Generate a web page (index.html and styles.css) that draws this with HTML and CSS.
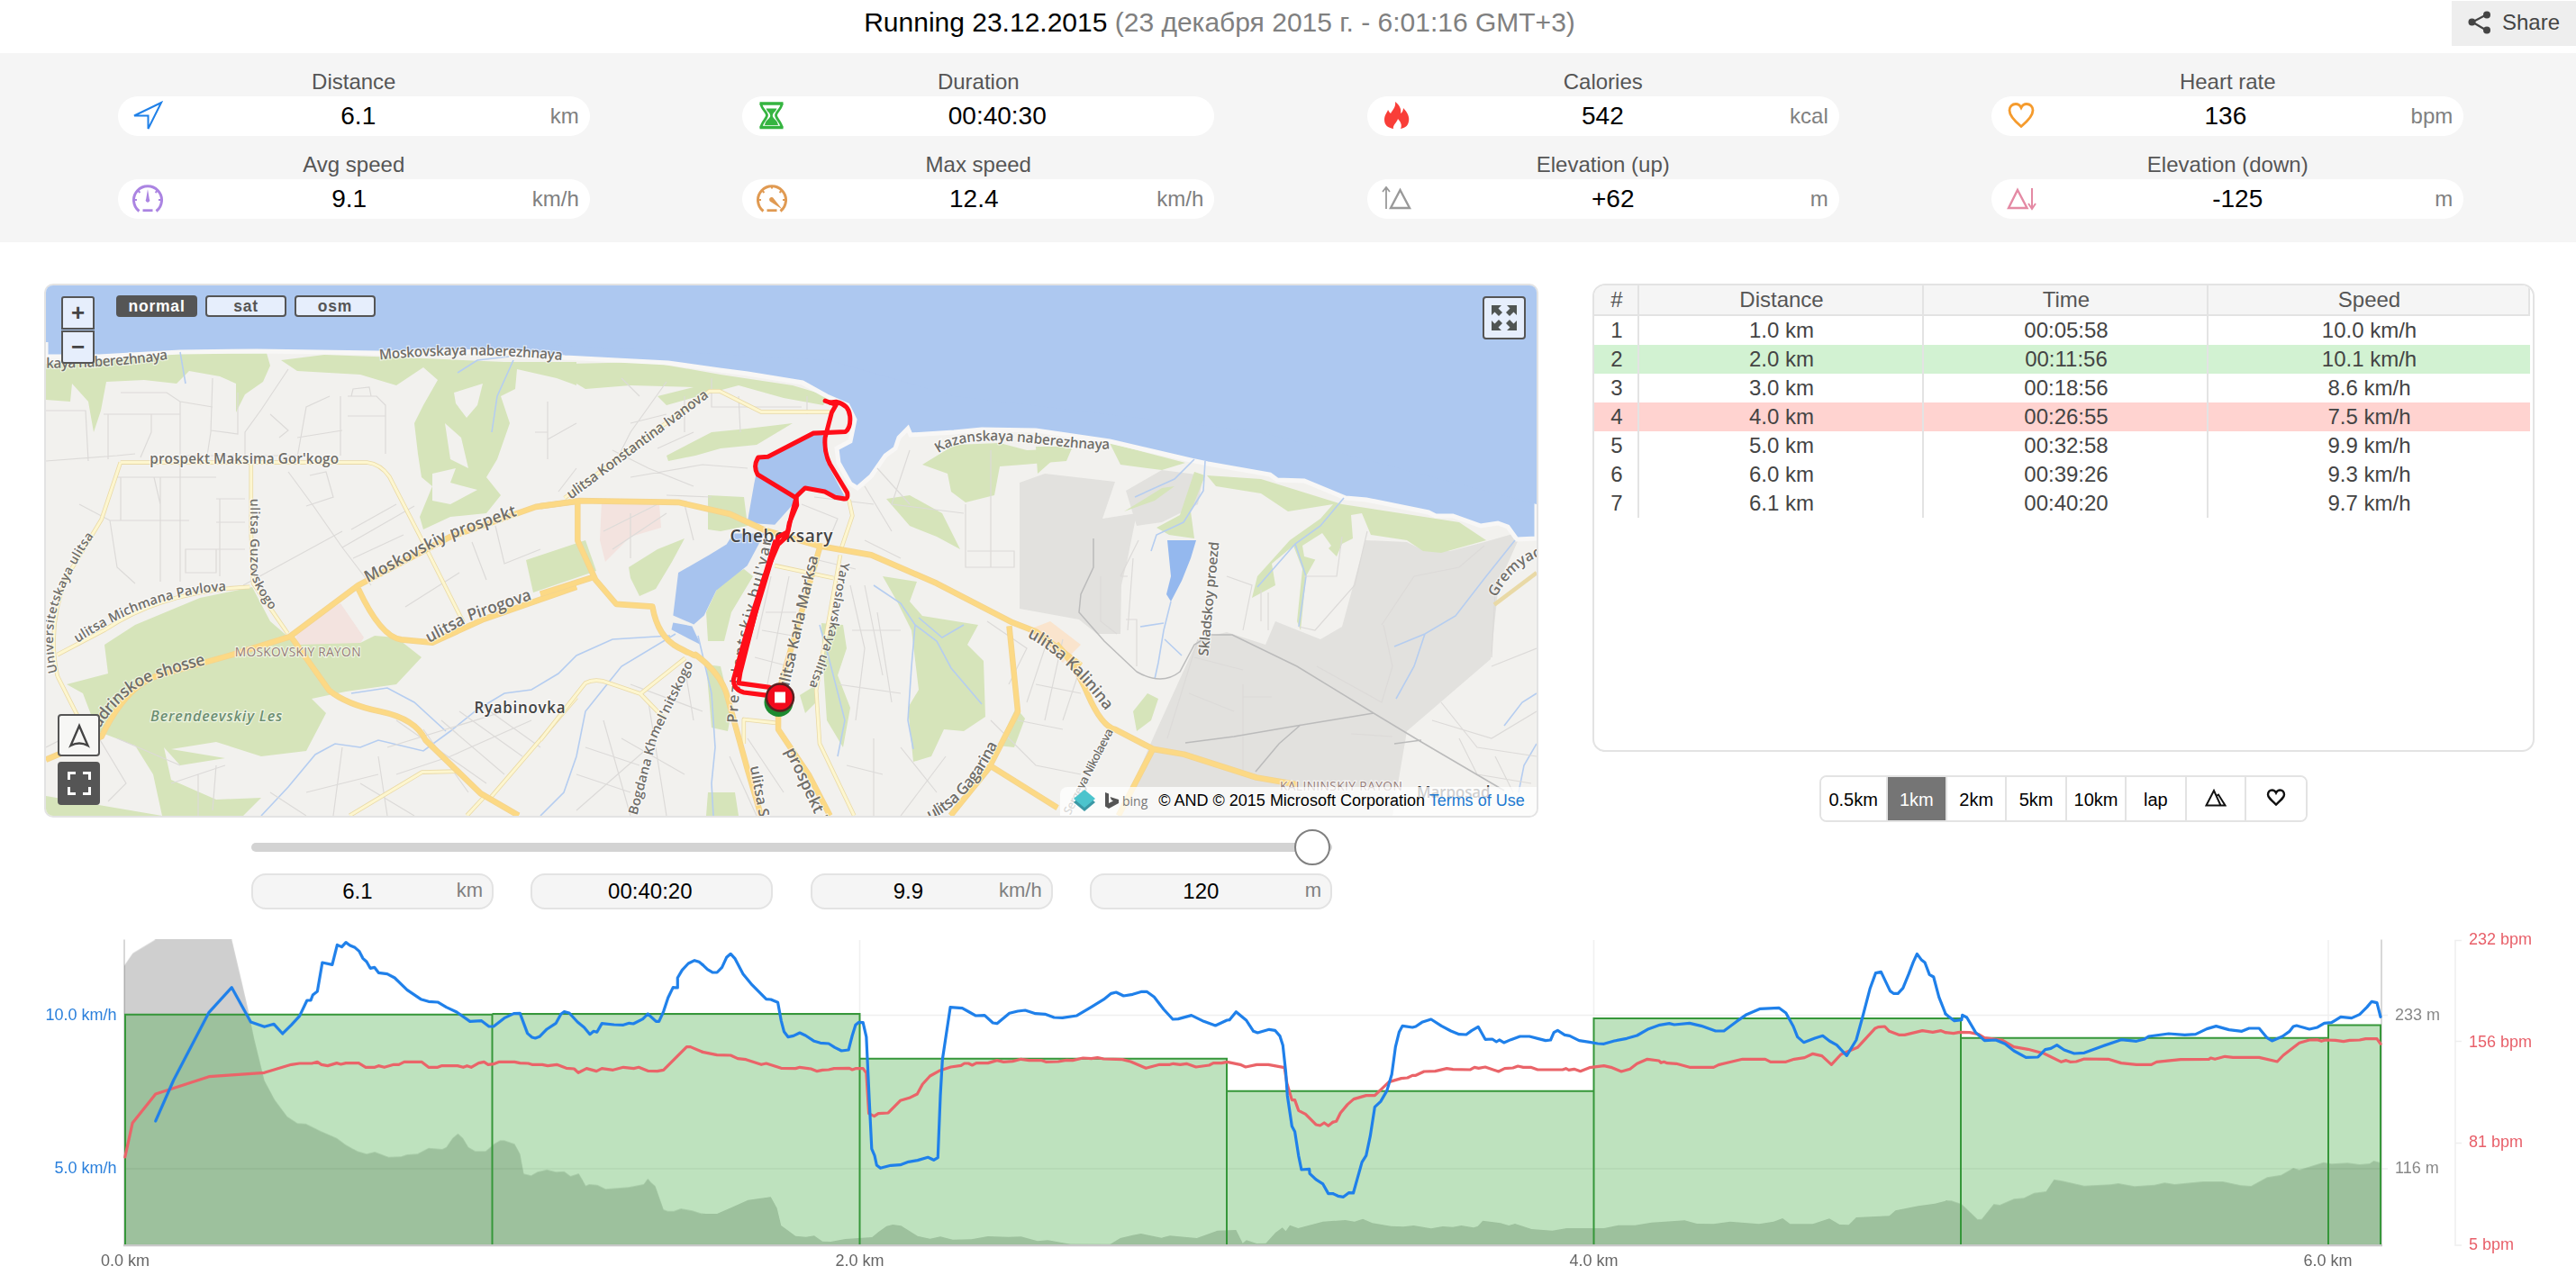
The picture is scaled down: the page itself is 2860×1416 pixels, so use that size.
FILE: index.html
```html
<!DOCTYPE html>
<html lang="en">

<head>
    <meta charset="UTF-8">
    <title>Running 23.12.2015</title>
    <link rel="stylesheet" href="styles.css">
</head>

<body>

    <header class="header">
        <h1 class="title">Running 23.12.2015 <span>(23 декабря 2015 г. - 6:01:16 GMT+3)</span></h1>
        <button class="share-button">
            <svg width="26" height="26" viewBox="0 0 26 26"><path d="M21 4L5 12.500L21 22" fill="none" stroke="#444" stroke-width="2.200"/><circle cx="21" cy="4.500" r="4" fill="#444"/><circle cx="4.500" cy="12.500" r="4" fill="#444"/><circle cx="21" cy="21.500" r="4" fill="#444"/></svg>
            Share
        </button>
    </header>

    <section class="stats">
        <div class="stat">
            <div class="stat-label">Distance</div>
            <div class="stat-box">
                <svg class="stat-icon" viewBox="0 0 34 34"><path d="M32 2L2 16.500H17.500V31Z" fill="none" stroke="#1f80e8" stroke-width="2"/></svg>
                <span class="value">6.1</span><span class="unit">km</span>
            </div>
        </div>
        <div class="stat">
            <div class="stat-label">Duration</div>
            <div class="stat-box">
                <svg class="stat-icon" viewBox="0 0 34 34"><path d="M3.500 3H29.500M3.500 29.500H29.500" stroke="#35b440" stroke-width="3.400"/><path d="M5 3C5 9 11.500 12 11.500 16S5 24 5 30M28 3C28 9 21.500 12 21.500 16S28 24 28 30" fill="none" stroke="#35b440" stroke-width="2.800"/><path d="M10.500 8.500H22.500C21 12.500 17.800 13 17.800 17C18.500 20 23 21 24 27H9C10 21 14.500 20 15.200 17C15.200 13 12 12.500 10.500 8.500Z" fill="#35b440"/></svg>
                <span class="value">00:40:30</span><span class="unit"></span>
            </div>
        </div>
        <div class="stat">
            <div class="stat-label">Calories</div>
            <div class="stat-box">
                <svg class="stat-icon" viewBox="0 0 34 34"><path d="M15 1C20 5 22 9 21 14C23 13 24 10 24 8C29 13 31 18 30 23C29 28 26 30 21 31C23 27 21 23 18 20C17 24 12 27 13 31C7 30 3 27 3 21C3 16 6 13 7 10C8 12 9 13 10 14C12 10 16 7 15 1Z" fill="#f93e38"/></svg>
                <span class="value">542</span><span class="unit">kcal</span>
            </div>
        </div>
        <div class="stat">
            <div class="stat-label">Heart rate</div>
            <div class="stat-box">
                <svg class="stat-icon" viewBox="0 0 34 34"><path d="M17 28.500C8 21 4 16 4 10.500C4 6.500 7 3.500 11 3.500C14 3.500 16 5.500 17 7.500C18 5.500 20 3.500 23 3.500C27 3.500 30 6.500 30 10.500C30 16 26 21 17 28.500Z" fill="none" stroke="#f59b2d" stroke-width="2.800"/></svg>
                <span class="value">136</span><span class="unit">bpm</span>
            </div>
        </div>
        <div class="stat">
            <div class="stat-label">Avg speed</div>
            <div class="stat-box">
                <svg class="stat-icon" viewBox="0 0 34 34"><path d="M7.500 30.500A15.500 15.500 0 1 1 26.500 30.500" fill="none" stroke="#ab84e2" stroke-width="3"/><path d="M11.500 29.700H22.500" stroke="#ab84e2" stroke-width="2.800"/><path d="M2 18H5M29 18H32M6.500 8L8.500 10M27.500 8L25.500 10" stroke="#ab84e2" stroke-width="2"/><path d="M17 6L18.800 17A2.300 2.300 0 1 1 15.200 17Z" fill="#ab84e2"/></svg>
                <span class="value">9.1</span><span class="unit">km/h</span>
            </div>
        </div>
        <div class="stat">
            <div class="stat-label">Max speed</div>
            <div class="stat-box">
                <svg class="stat-icon" viewBox="0 0 34 34"><path d="M7.500 30.500A15.500 15.500 0 1 1 26.500 30.500" fill="none" stroke="#e09a52" stroke-width="3"/><path d="M11.500 29.700H22.500" stroke="#e09a52" stroke-width="2.800"/><path d="M2 18H5M29 18H32M6.500 8L8.500 10M27.500 8L25.500 10M17 3V5.500" stroke="#e09a52" stroke-width="2"/><path d="M28.500 28.500L15.500 20A2.600 2.600 0 1 1 19 16.500Z" fill="#e09a52"/></svg>
                <span class="value">12.4</span><span class="unit">km/h</span>
            </div>
        </div>
        <div class="stat">
            <div class="stat-label">Elevation (up)</div>
            <div class="stat-box">
                <svg class="stat-icon" viewBox="0 0 34 34"><path d="M5 28V5M1 9L5 4L9 9" fill="none" stroke="#999" stroke-width="1.800"/><path d="M20.500 7L31 27H10Z" fill="none" stroke="#999" stroke-width="2.400"/></svg>
                <span class="value">+62</span><span class="unit">m</span>
            </div>
        </div>
        <div class="stat">
            <div class="stat-label">Elevation (down)</div>
            <div class="stat-box">
                <svg class="stat-icon" viewBox="0 0 34 34"><path d="M29 5V27M25 22L29 28L33 22" fill="none" stroke="#e48aa4" stroke-width="2"/><path d="M13 7L23.500 27H3Z" fill="none" stroke="#e48aa4" stroke-width="2.400"/></svg>
                <span class="value">-125</span><span class="unit">m</span>
            </div>
        </div>
    </section>

    <main class="content">
        <div class="left">
            <div class="map">
                <svg class="map-canvas" viewBox="51 317 1655 589" preserveAspectRatio="none">
                    <rect x="51" y="317" width="1655" height="589" fill="#f2f1ee"/>

                    <!-- industrial areas and districts -->
                    <g fill="#e2e1de">
                        <path d="M1132 536L1160 526L1238 535L1224 576L1262 570L1252 620L1245 650L1244 704L1218 704L1198 688L1132 676Z"/>
                        <path d="M1250 545L1290 522L1336 528L1330 560L1290 580L1262 584Z"/>
                        <path d="M1516 600L1562 602L1582 612L1610 612L1648 602L1690 590L1664 648L1655 732L1562 812L1546 906H1243L1280 820L1330 710L1362 702L1405 716L1416 690L1466 710L1490 696Z"/>
                    </g>
                    <g fill="#f3e3df">
                        <path d="M328 700L378 670L404 708L398 718L330 718Z"/>
                        <path d="M668 556L732 560L734 586L700 596L672 624L666 600Z"/>
                    </g>
                    <path d="M1140 700L1166 690L1200 716L1180 736Z" fill="#fae4cd"/>

                    <!-- parks -->
                    <g fill="#d6e4ba">
                        <path d="M51 404L110 400L190 393L296 392L300 406L292 424L272 438L262 458L262 426L244 418L210 412L196 426L160 422L118 424L112 456L104 480L98 446L80 426L78 446L51 444Z"/>
                        <path d="M312 400L360 394L470 398L560 402L640 402L640 428L618 420L574 410L572 432L556 440L566 470L552 510L540 530L556 550L540 570L500 574L470 588L466 574L480 540L468 530L464 504L460 470L470 450L486 422L470 408L440 428L400 416L330 412Z"/>
                        <path d="M630 404L720 402L800 416L880 428L920 440L914 450L870 442L820 428L790 436L740 450L730 440L770 430L700 428L650 432L630 420Z"/>
                        <path d="M740 506L790 480L830 476L880 470L840 494L800 498L772 506L742 512Z"/>
                        <path d="M116 716L150 694L222 664L280 652L300 690L330 716L400 714L416 706L440 708L468 730L440 760L384 768L346 776L362 792L340 834L290 840L240 824L190 832L250 842L200 850L182 830L190 866L240 888L290 886L270 906H51V884L180 906L170 860L150 828L108 812L92 770L74 760L120 748Z"/>
                        <path d="M584 622L650 600L662 634L592 658Z"/>
                        <path d="M698 630L730 610L760 598L746 624L728 654L710 662L700 642Z"/>
                        <path d="M786 550L826 552L830 584L800 590L786 588Z"/>
                        <path d="M800 646L826 632L836 640L812 680L804 712L786 712L784 680Z"/>
                        <path d="M784 738L800 740L812 790L808 812L790 808Z"/>
                        <path d="M786 880L816 880L820 906H784Z"/>
                        <path d="M1024 516L1060 494L1110 492L1140 500L1190 498L1184 512L1136 516L1110 518L1104 550L1072 558L1056 546L1052 526Z"/>
                        <path d="M984 554L1010 550L1046 570L1066 610L1040 596L1010 584Z"/>
                        <path d="M980 640L1018 646L1010 668L1024 684L1086 694L1074 716L1092 734L1094 796L1070 812L1048 810L1034 840L1014 846L1008 786L1020 766L1012 700L996 668Z"/>
                        <path d="M912 692L936 694L940 720L930 750L944 786L936 830L918 800L914 740Z"/>
                        <path d="M888 772L904 762L906 780L894 792Z"/>
                        <path d="M1128 786L1138 798L1126 830L1108 828Z"/>
                        <path d="M1150 496L1184 496L1170 510L1152 526ZM1232 492L1316 514L1290 522L1244 516Z"/>
                        <path d="M1248 568L1290 542L1304 540L1282 556ZM1326 524L1338 528L1322 568L1326 598L1298 594L1284 586L1310 572Z"/>
                        <path d="M1340 528L1400 532L1490 560L1620 580L1650 600L1600 614L1580 612L1562 600L1522 594L1512 570L1500 572L1502 598L1490 604L1484 618L1470 604L1450 640L1444 700L1440 690L1446 632L1436 606L1412 626L1416 650L1390 664L1396 640L1432 600L1466 576L1480 560L1430 568L1400 548L1350 540Z"/>
                        <path d="M1274 770L1286 776L1278 800L1262 812L1258 790Z"/>
                    </g>
                    <g fill="#f2f1ee">
                        <path d="M504 436L536 426L530 450L518 464L506 448ZM494 470L512 486L520 520L500 510ZM480 526L506 520L500 536L530 544L500 560L480 556Z"/>
                        <path d="M1446 606L1468 592L1478 606L1462 622L1448 618Z"/>
                    </g>

                    <!-- water -->
                    <path d="M51 317V396L110 396L200 391L285 390L420 392L560 390L627 397L742 403L799 411L830 415L891 425L918 440L941 450L949 466L944 490L929 498L931 514L944 537L952 542L967 529L983 506L994 498L998 486L1008 476L1011 483L1059 480L1090 477L1150 478L1232 490L1322 511L1341 515L1410 527L1418 533L1448 534L1494 553L1517 555L1586 569L1594 573L1613 573L1644 584L1663 581L1674 585L1684 599L1706 598V317Z" fill="#adc8f0" stroke="#f8f7f6" stroke-width="5"/>
                    <path d="M51 317H1706V560L1400 480L1060 440L920 400L560 380H51Z" fill="#adc8f0"/>
                    <g transform="translate(600 300) scale(.3827 .3954)" fill="#a7c3ee">
                        <path d="M830 460L790 460L665 525L635 530L620 600L600 710L680 715L740 650L770 615L830 625L885 640L830 540Z"/>
                        <path d="M560 740L540 770L490 800L400 850L385 970L445 995L475 970L510 900L600 830L650 740Z"/>
                        <path d="M385 990L440 1000L465 1052L420 1030L380 1010Z"/>
                    </g>
                    <path d="M1296 600L1328 600L1322 620L1312 645L1300 668L1295 660L1300 640Z" fill="#94b8ee"/>
                    <g class="river">
                        <path d="M200 391L206 426M570 400L552 440L546 480M565 396L530 400L508 414"/>
                        <path d="M290 906L320 874L350 838L372 826L400 830L420 822L470 834L500 812L530 788L560 770L590 766L620 748L640 728L680 710L744 706M390 770L430 764L460 780L495 812"/>
                        <path d="M600 906L626 880L640 840L650 790L690 740L750 704"/>
                        <path d="M775 706L790 770L794 830L790 870L792 906"/>
                        <path d="M970 650L1000 670L1016 694L1012 740L1008 800L1014 832M1016 694L1040 712L1056 742L1090 782M1020 686L1046 708L1070 694M910 694L920 730L938 800L930 840"/>
                        <path d="M1326 510L1304 532L1260 552M1338 512L1336 545L1314 580L1284 594L1278 612M1300 668L1292 700L1286 736L1282 754M1292 692L1266 696M1293 710L1312 728"/>
                        <path d="M1492 553L1466 584L1438 604L1396 652M1438 604L1450 640L1442 696M1682 600L1650 640L1616 684L1582 704L1548 718M1582 704L1570 740L1550 776M1706 770L1690 780L1670 806M1706 826L1692 850L1686 880"/>
                    </g>

                    <!-- small streets -->
                    <g class="street">
                        <path d="M51 456H95L98 512M51 512L130 506L150 504M115 460H200V646M134 436H185L200 446V460M120 460V510M168 460V480L156 508M200 506H340M236 420L234 480L230 506M234 478L264 482V436M320 410L290 455L272 480V508M200 446L236 452M366 440L340 452L330 508M378 440V506M386 462H428V504M386 440H418L428 450V500M300 460L320 478L310 486M330 486L380 478M390 440L392 432L410 430L412 440"/>
                        <path d="M130 530H240M134 530V578H178V530M171 530L178 560V646M88 560L122 578H210M122 578L130 630L150 648M240 554H272M240 580H272M240 610H272M244 554V640M206 610H240V636H206Z"/>
                        <path d="M320 524L348 562L380 608L412 650M340 562L370 552L362 524L344 528M390 588L440 560M380 608L460 562M270 650L380 590M392 620L448 594M450 674L510 636M524 602L540 644M550 584L560 626L600 610"/>
                        <path d="M608 446V510M594 480H608M608 488L640 470M740 424L700 480L680 520M760 440V480M790 420V452H890M820 440L822 480M896 440V460M680 500L720 520L770 540M700 530L780 516L830 520M700 470L740 460M730 498L770 480M740 550L790 552M690 420L710 440M640 520L620 546"/>
                        <path d="M700 570V620M760 560L770 600M670 590L730 560M680 610L740 570M850 680H884M846 700L880 706M838 730L876 740M820 770L870 776M856 640L840 710M876 640L852 760M890 560L930 576L920 600M904 552L970 560M960 540L990 590M974 520L1010 560M1010 500L990 560L1070 570M1072 560V630H1126V612H1074M1100 500V630M960 600L1000 620M900 620L950 632"/>
                        <path d="M944 650L960 720L950 800M960 650L980 750M974 680L990 780M930 760L1000 770M946 700L1000 700M1000 830L1040 880M1050 840L1000 906M970 820V906M940 850L980 860M1096 690L1140 720L1120 760M1160 720L1140 780M1130 800L1180 810M1180 710L1160 800M1200 740L1180 800M1100 800L1150 850L1200 860M1150 760L1200 770"/>
                        <path d="M440 800L540 870M430 830L560 790M470 810L520 880M490 800L560 860M510 790L580 840M530 780L600 830M440 860L500 840L590 800M400 870L460 906M380 830L370 906M340 880L420 860M110 820L140 870L120 890M130 820L200 850M51 830L90 810M190 870L250 850M220 860V906M240 850L236 900M420 840L430 906M300 880L340 906"/>
                        <path d="M640 860L700 880M650 830L710 850M670 800L700 906M690 820L760 860M720 780L740 906M700 760L780 790M640 900L720 830M760 740L770 800M810 840L840 906M830 820L870 880"/>
                        <path d="M1244 640H1252M1222 640V690L1240 704M1258 620L1252 700M1264 600L1244 640M1250 688H1262V740M1362 640L1390 650L1380 700M1400 655V690M1408 658V700M1490 596L1484 640L1448 640M1518 590L1504 650L1460 700L1442 696M1534 694L1570 640L1620 630L1648 606M1536 694L1546 740L1534 780L1462 740M1320 770L1370 790M1326 730L1380 744M1330 710L1296 820M1380 760V860M1380 774L1412 774M1500 815L1546 818M1660 656L1656 730M1590 800L1656 820L1706 790M1600 780L1640 830L1706 840M1656 740L1706 720M1620 820L1640 860L1700 870M1660 840L1680 880"/>
                    </g>
                    <g class="rail">
                        <path d="M1214 598V630L1200 660L1198 680L1226 712L1262 746Q1290 762 1310 746L1326 716L1344 705H1368L1440 740L1525 792L1578 824L1670 878"/>
                        <path d="M1316 825L1370 818L1440 806L1525 792M1394 857L1420 826L1444 805M1548 826L1578 822"/>
                    </g>

                    <!-- roads -->
                    <g transform="translate(40 300) scale(.3827 .3954)">
                        <g class="minor-case"><path d="M245 540H960Q1000 545 1025 580L1110 740L1240 990"/><path d="M62 1140Q30 1000 90 860L190 700L245 540M624 545V740L630 880L730 1020M62 1080L200 1010Q370 900 620 890M62 1140L130 1270"/><path d="M910 1532L1120 1410L1220 1408M1320 1480L1568 1200M1250 1532L1300 1480"/></g>
                        <g class="minor"><path d="M245 540H960Q1000 545 1025 580L1110 740L1240 990"/><path d="M62 1140Q30 1000 90 860L190 700L245 540M624 545V740L630 880L730 1020M62 1080L200 1010Q370 900 620 890M62 1140L130 1270"/><path d="M910 1532L1120 1410L1220 1408M1320 1480L1568 1200M1250 1532L1300 1480"/></g>
                        <g class="major-case"><path d="M29 1375L190 1310Q260 1170 350 1140L570 1080L735 1030L935 885L1200 750L1450 665L1568 650M935 895Q1000 1030 1060 1038L1150 1046L1300 980L1568 890M740 1030L850 1180Q900 1220 1000 1240T1130 1320L1290 1470L1400 1532"/></g>
                        <g class="major"><path d="M29 1375L190 1310Q260 1170 350 1140L570 1080L735 1030L935 885L1200 750L1450 665L1568 650M935 895Q1000 1030 1060 1038L1150 1046L1300 980L1568 890M740 1030L850 1180Q900 1220 1000 1240T1130 1320L1290 1470L1400 1532"/></g>
                    </g>
                    <g transform="translate(600 300) scale(.3827 .3954)">
                        <g class="minor-case"><path d="M70 640L490 340H520L640 398H850M895 645L905 690L870 790M680 830L850 865M870 800L800 1180L810 1330L910 1532M590 1330V1262L685 1272M0 1320L130 1160Q160 1145 200 1160L290 1190L420 1090M290 1190L360 1260"/></g>
                        <g class="minor"><path d="M70 640L490 340H520L640 398H850M895 645L905 690L870 790M680 830L850 865M870 800L800 1180L810 1330L910 1532M590 1330V1262L685 1272M0 1320L130 1160Q160 1145 200 1160L290 1190L420 1090M290 1190L360 1260"/></g>
                        <g class="major-case"><path d="M0 663L110 648L400 652L550 685L650 730L810 775L960 800L1150 880L1370 990L1437 1015L1568 1110M108 650V760L160 870L220 938L325 945Q340 1030 400 1060T450 1080Q520 1130 540 1190L600 1400L640 1532M0 910L155 862M810 780L690 1190V1290L780 1420L840 1532M1360 1000L1385 1240L1300 1400L1190 1532M1310 1395L1500 1510"/></g>
                        <g class="major"><path d="M0 663L110 648L400 652L550 685L650 730L810 775L960 800L1150 880L1370 990L1437 1015L1568 1110M108 650V760L160 870L220 938L325 945Q340 1030 400 1060T450 1080Q520 1130 540 1190L600 1400L640 1532M0 910L155 862M810 780L690 1190V1290L780 1420L840 1532M1360 1000L1385 1240L1300 1400L1190 1532M1310 1395L1500 1510"/></g>
                    </g>
                    <g transform="translate(1150 300) scale(.3827 .3954)">
                        <path class="minor-case" d="M1453 850L1330 940"/>
                        <path class="major-case" d="M60 1050Q110 1100 150 1190T230 1290L340 1345L430 1360L640 1425L760 1445M340 1345L240 1532"/>
                        <path class="major" d="M60 1050Q110 1100 150 1190T230 1290L340 1345L430 1360L640 1425L760 1445M340 1345L240 1532"/>
                    </g>

                    <!-- labels -->
                    <g class="map-label" transform="translate(40 300) scale(.3827 .3954)">
                        <path id="l1" d="M29 275Q220 275 385 250"/><text font-size="40"><textPath href="#l1" textLength="355">kaya naberezhnaya</textPath></text>
                        <path id="l2" d="M997 252Q1260 225 1532 254"/><text font-size="40"><textPath href="#l2" textLength="530">Moskovskaya naberezhnaya</textPath></text>
                        <text x="330" y="545" font-size="40" textLength="548">prospekt Maksima Gor'kogo</text>
                        <path id="l3" d="M62 1130Q30 1010 80 900T175 738"/><text font-size="36"><textPath href="#l3" textLength="412">Universitetskaya ulitsa</textPath></text>
                        <path id="l4" d="M622 642V850Q635 900 692 970"/><text font-size="36"><textPath href="#l4" textLength="330">ulitsa Guzovskogo</textPath></text>
                        <path id="l5" d="M120 1048Q330 910 560 900"/><text font-size="38"><textPath href="#l5" textLength="462">ulitsa Michmana Pavlova</textPath></text>
                        <path id="l6" d="M170 1310Q250 1180 350 1148T510 1104"/><text font-size="46"><textPath href="#l6" textLength="395">Yadrinskoe shosse</textPath></text>
                        <path id="l7" d="M962 878L1190 760L1400 688"/><text font-size="46"><textPath href="#l7" textLength="475">Moskovskiy prospekt</textPath></text>
                        <path id="l8" d="M1140 1048L1260 985L1445 923"/><text font-size="46"><textPath href="#l8" textLength="325">ulitsa Pirogova</textPath></text>
                        <text x="577" y="1086" class="district" font-size="36" textLength="365">MOSKOVSKIY RAYON</text>
                        <text x="332" y="1268" class="forest" font-size="42" textLength="382">Berendeevskiy Les</text>
                        <text x="1271" y="1244" class="town" font-size="44" textLength="264">Ryabinovka</text>
                    </g>
                    <g class="map-label" transform="translate(600 300) scale(.3827 .3954)">
                        <path id="l9" d="M88 645L495 352"/><text font-size="40"><textPath href="#l9" textLength="495">ulitsa Konstantina Ivanova</textPath></text>
                        <text x="550" y="764" class="town" font-size="50" textLength="298">Cheboksary</text>
                        <path id="l10" d="M572 1272Q576 1110 620 960T672 745"/><text font-size="42"><textPath href="#l10" textLength="525">Prezidentskiy bul'var</textPath></text>
                        <path id="l11" d="M718 1185L808 795"/><text font-size="44"><textPath href="#l11" textLength="390">ulitsa Karla Marksa</textPath></text>
                        <path id="l12" d="M872 820L835 1020L778 1175"/><text font-size="36"><textPath href="#l12" textLength="362">Yaroslavskaya ulitsa</textPath></text>
                        <path id="l13" d="M280 1532L340 1310L448 1095"/><text font-size="38"><textPath href="#l13" textLength="460">Bogdana Khmel'nitskogo</textPath></text>
                        <path id="l14" d="M608 1395L640 1560"/><text font-size="42"><textPath href="#l14">ulitsa S</textPath></text>
                        <path id="l15" d="M710 1350L830 1600"/><text font-size="46"><textPath href="#l15">prospekt I</textPath></text>
                        <path id="l16" d="M1130 1545Q1250 1490 1330 1325"/><text font-size="44"><textPath href="#l16" textLength="295">ulitsa Gagarina</textPath></text>
                        <path id="l17" d="M1155 515Q1220 462 1437 487T1655 498"/><text font-size="40"><textPath href="#l17" textLength="505">Kazanskaya naberezhnaya</textPath></text>
                        <path id="l18" d="M1412 1030Q1530 1090 1645 1245"/><text font-size="46"><textPath href="#l18" textLength="312">ulitsa Kalinina</textPath></text>
                    </g>
                    <g class="map-label" transform="translate(1150 300) scale(.3827 .3954)">
                        <path id="l19" d="M500 1085L532 762"/><text font-size="40"><textPath href="#l19" textLength="322">Skladskoy proezd</textPath></text>
                        <path id="l20" d="M1335 920Q1390 820 1480 800"/><text font-size="42"><textPath href="#l20">Gremyach</textPath></text>
                        <path id="l21" d="M100 1532L228 1290"/><text font-size="34"><textPath href="#l21" textLength="268">Sergeya Nikolaeva</textPath></text>
                        <text x="708" y="1462" class="district" font-size="36" textLength="355">KALININSKIY RAYON</text>
                        <text x="1105" y="1482" class="town" font-size="44">Marposad</text>
                    </g>

                    <!-- track -->
                    <g transform="translate(600 300) scale(.3827 .3954)">
                        <path class="track" d="M826 367L846 374L858 378L845 400L826 470Q822 510 840 545L890 625Q894 645 880 642L855 638L825 622L768 612L742 636L744 660L722 710L715 748L690 770L650 860L600 1010L560 1150Q560 1178 590 1186L655 1194"/>
                        <path class="track" d="M840 372L858 370Q895 378 898 410T885 454L792 458L660 524L632 526Q616 550 630 574L742 640L728 690L718 735L690 750L640 900L580 1130L575 1160L665 1172"/>
                    </g>
                    <path d="M862 600L838 680L818 752" fill="none" stroke="#ff0d18" stroke-width="7"/>
                    <circle cx="864.500" cy="780" r="16" fill="#1d8a30"/>
                    <circle cx="866" cy="774.500" r="15" fill="#f20a1c" stroke="#5a2020" stroke-width="2.500"/>
                    <rect x="860" y="768.500" width="12" height="12" fill="#fff"/>
                </svg>

                <div class="zoom-control">
                    <button>+</button>
                    <button>−</button>
                </div>
                <div class="type-control">
                    <button class="active">normal</button>
                    <button>sat</button>
                    <button>osm</button>
                </div>
                <button class="map-button expand-button">
                    <svg width="28" height="28" viewBox="0 0 28 28" fill="#505552"><path d="M0 0H11L7.500 3.500L12 8L8 12L3.500 7.500L0 11ZM28 0H17L20.500 3.500L16 8L20 12L24.500 7.500L28 11ZM0 28H11L7.500 24.500L12 20L8 16L3.500 20.500L0 17ZM28 28H17L20.500 24.500L16 20L20 16L24.500 20.500L28 17Z"/></svg>
                </button>
                <button class="map-button north-button">
                    <svg width="26" height="28" viewBox="0 0 26 28"><path d="M13 3L22.500 25Q13 20 3.500 25Z" fill="none" stroke="#444" stroke-width="2.400"/></svg>
                </button>
                <button class="map-button full-button">
                    <svg width="26" height="26" viewBox="0 0 26 26"><path d="M1.500 9V1.500H9M17 1.500H24.500V9M24.500 17V24.500H17M9 24.500H1.500V17" fill="none" stroke="#fff" stroke-width="3"/></svg>
                </button>
                <div class="attribution">
                    <svg width="24" height="24" viewBox="0 0 24 24"><path d="M12 4L24 14L12 24L0 14Z" fill="#3a98a5"/><path d="M12 0L24 10L12 20L0 10Z" fill="#4cc4cd"/></svg>
                    <svg width="16" height="18" viewBox="0 0 16 18"><path d="M0 0L4 1.500V12L9 9.500L7 8.500L5.500 5L15 8V12L4 18L0 15.500Z" fill="#555"/></svg>
                    <span class="bing">bing</span>
                    <span>© AND © 2015 Microsoft Corporation <a href="#">Terms of Use</a></span>
                </div>
            </div>

            <div class="player">
                <div class="slider"><div class="slider-handle"></div></div>
                <div class="readouts">
                    <div class="readout"><span class="value">6.1</span><span class="unit">km</span></div>
                    <div class="readout"><span class="value">00:40:20</span><span class="unit"></span></div>
                    <div class="readout"><span class="value">9.9</span><span class="unit">km/h</span></div>
                    <div class="readout"><span class="value">120</span><span class="unit">m</span></div>
                </div>
            </div>
        </div>

        <div class="right">
            <div class="laps">
                <table>
                    <thead>
                        <tr><th class="num">#</th><th>Distance</th><th>Time</th><th class="speed">Speed</th></tr>
                    </thead>
                    <tbody>
                        <tr><td>1</td><td>1.0 km</td><td>00:05:58</td><td>10.0 km/h</td></tr>
                        <tr class="best"><td>2</td><td>2.0 km</td><td>00:11:56</td><td>10.1 km/h</td></tr>
                        <tr><td>3</td><td>3.0 km</td><td>00:18:56</td><td>8.6 km/h</td></tr>
                        <tr class="worst"><td>4</td><td>4.0 km</td><td>00:26:55</td><td>7.5 km/h</td></tr>
                        <tr><td>5</td><td>5.0 km</td><td>00:32:58</td><td>9.9 km/h</td></tr>
                        <tr><td>6</td><td>6.0 km</td><td>00:39:26</td><td>9.3 km/h</td></tr>
                        <tr><td>7</td><td>6.1 km</td><td>00:40:20</td><td>9.7 km/h</td></tr>
                    </tbody>
                </table>
            </div>
            <div class="split-buttons">
                <button class="wide">0.5km</button>
                <button class="active">1km</button>
                <button>2km</button>
                <button>5km</button>
                <button>10km</button>
                <button>lap</button>
                <button><svg width="24" height="20" viewBox="0 0 24 20"><path d="M1.500 18.500L10 2L17.500 18.500ZM12.500 8L15 6.500L22.500 18.500H17" fill="none" stroke="#111" stroke-width="2"/></svg></button>
                <button><svg width="22" height="20" viewBox="0 0 22 20"><path d="M11 17.500C5 12 2 9.500 2 6.500C2 3.500 4 1.500 6.500 1.500C8.500 1.500 10 2.500 11 4.500C12 2.500 13.500 1.500 15.500 1.500C18 1.500 20 3.500 20 6.500C20 9.500 17 12 11 17.500Z" fill="none" stroke="#111" stroke-width="2.400"/></svg></button>
            </div>
        </div>
    </main>

    <svg class="chart" width="2860" height="396" viewBox="0 1020 2860 396">
        <!-- grid -->
        <path d="M138 1127.500H2651M138 1298H2651M954.500 1044V1383M1769.500 1044V1383M2585 1044V1383" stroke="#f0f0f0" stroke-width="1.500"/>
        <path d="M138 1043.500V1383M2644 1043.500V1383" stroke="#ccc" stroke-width="1.500"/>

        <!-- elevation -->
        <g opacity=".19">
            <path transform="translate(80 1020) scale(.4592 .3333)" d="M126 1088V158L137 135 147 116 202 70 386 70 410 210 425 300 440 400 465 540 490 605 520 660 545 683 565 684 600 708 640 732 662 755 690 776 712 785 732 778 765 795 795 794 810 787 835 785 862 765 895 769 905 762 920 732 933 717 945 732 958 762 975 776 1000 776 1020 752 1035 740 1045 740 1070 752 1083 785 1092 851 1110 857 1125 845 1148 837 1170 845 1190 843 1205 859 1225 850 1242 891 1250 886 1270 888 1290 902 1345 896 1382 886 1392 867 1400 880 1410 892 1430 970 1440 975 1455 975 1472 967 1500 974 1520 983 1530 984V1088Z"/>
            <path transform="translate(780 1020) scale(.4592 .3333)" d="M0 1088V984L35 984 75 960 110 938 165 928 180 965 190 1023 225 1058 250 1061 270 1057 290 1076 310 1077 345 1068 410 1062 425 1045 445 1025 460 1020 480 1024 520 1058 550 1067 575 1060 605 1070 650 1069 690 1059 740 1061 770 1060 810 1075 835 1072 890 1085 985 1086 1010 1065 1040 1055 1060 1050 1110 1064 1130 1057 1195 1065 1245 1040 1290 1038 1306 1082 1315 1072 1340 1083 1362 1082 1385 1047 1402 1030 1410 1042 1420 1022 1440 1032 1500 1010 1528 1007V1088Z"/>
            <path transform="translate(1480 1020) scale(.4592 .3333)" d="M0 1088V1008L30 1005 52 1010 72 1001 95 1015 140 1025 170 1027 195 1023 237 1033 265 1026 290 1028 310 1023 340 1030 350 1025 362 1007 405 1015 425 1023 440 1017 480 1035 530 1040 565 1032 655 1032 690 1022 730 1022 770 1013 850 1006 880 1017 920 1018 960 1010 1030 1018 1065 1010 1087 999 1105 1018 1160 1018 1200 1000 1225 1020 1247 1021 1265 996 1345 991 1360 973 1415 958 1455 950 1485 940V1088Z"/>
            <path transform="translate(2160 1020) scale(.4464 .3333)" d="M0 1088V940L15 941 40 952 80 1003 90 1002 120 952 135 955 170 935 195 932 220 915 250 910 270 870 290 875 345 891 410 887 430 883 470 893 520 888 545 881 570 886 640 877 690 877 735 890 760 892 800 863 835 855 865 832 880 838 940 813 960 818 1000 815 1030 820 1055 817 1065 808 1082 814V1088Z"/>
        </g>
        <path d="M137 1383H2645" stroke="#c8c8c8" stroke-width="2.500"/>

        <!-- average speed of each kilometre -->
        <g fill="#2ca02c" fill-opacity=".31">
            <path d="M139 1382V1126.700H546.500V1126H954.500V1175.700H1362V1211.700H1769.500V1131H2177V1152.700H2585V1138.500H2643V1382Z"/>
        </g>
        <g fill="none" stroke="#36973a" stroke-width="2">
            <path d="M139 1382V1126.700H546.500V1382M546.500 1126H954.500V1382M954.500 1175.700H1362V1382M1362 1211.700H1769.500M1769.500 1382V1131H2177V1382M2177 1152.700H2585M2585 1382V1138.500H2643V1382"/>
        </g>

        <!-- heart rate -->
        <g class="line heart-line">
            <polyline transform="translate(80 1020) scale(.4592 .3333)" points="128,795 146,682 202,585 331,527 465,514 530,487 550,483 580,483 593,478 603,487 618,491 640,482 650,486 662,482 693,482 710,496 732,496 741,491 755,496 778,487 790,487 803,478 845,478 862,496 884,496 893,491 932,491 946,496 955,491 965,496 983,482 996,478 1006,487 1019,485 1033,478 1070,478 1083,482 1103,483 1112,487 1137,487 1150,491 1172,487 1195,499 1214,501 1224,514 1244,500 1268,509 1281,500 1308,505 1333,496 1358,500 1370,496 1392,508 1415,509 1430,505 1486,428 1495,428 1524,445"/>
            <polyline transform="translate(780 1020) scale(.4592 .3333)" points="0,445 35,455 68,456 85,467 105,470 142,487 154,483 190,499 225,500 235,496 262,501 277,509 290,505 305,504 318,500 355,499 362,504 370,500 388,500 396,515 402,650 415,659 425,650 449,648 478,607 500,598 519,585 532,552 550,525 572,508 600,495 625,490 633,483 643,483 652,489 662,482 690,482 712,473 728,478 750,476 770,469 790,473 820,473 830,478 860,477 880,472 895,473 920,465 940,467 955,464 970,468 1015,470 1035,477 1072,499 1105,487 1130,487 1138,484 1155,487 1170,484 1193,495 1225,489 1235,482 1255,482 1268,478 1300,487 1313,495 1340,487 1368,487 1407,497 1413,550 1425,605 1432,605 1441,640 1458,652 1483,687 1493,690 1503,681 1513,691 1524,679"/>
            <polyline transform="translate(1480 1020) scale(.4592 .3333)" points="0,679 8,676 18,648 35,620 50,602 80,590 101,590 135,545 165,533 180,531 192,523 200,523 220,510 247,509 275,500 290,503 332,504 342,496 352,499 368,495 400,510 415,500 435,498 447,492 460,496 478,496 495,504 555,504 563,500 570,505 583,502 598,509 620,497 655,491 672,496 697,510 718,502 735,484 760,469 788,474 793,481 800,478 808,482 830,484 862,496 920,496 932,488 990,469 1045,469 1058,478 1095,478 1115,469 1140,464 1160,451 1182,458 1205,487 1228,453 1268,430 1310,367 1318,362 1334,360 1345,376 1368,388 1382,388 1425,374 1450,379 1470,374 1481,380"/>
            <polyline transform="translate(2160 1020) scale(.4464 .3333)" points="0,380 20,383 35,379 60,380 82,386 97,398 140,405 170,428 205,436 245,450 288,478 300,473 310,478 325,477 345,468 405,469 437,482 475,487 512,487 525,478 585,470 655,469 660,465 670,469 695,460 715,463 780,463 825,477 840,456 880,415 905,405 925,404 935,409 945,405 970,406 990,410 1005,406 1030,405 1045,401 1073,401 1082,418"/>
        </g>

        <!-- speed -->
        <g class="line speed-line">
            <polyline transform="translate(80 1020) scale(.4592 .3333)" points="202,675 245,540 331,313 386,230 432,345 465,361 488,352 509,384 530,355 550,325 568,273 577,273 582,255 593,243 605,147 629,154 641,88 652,95 662,80 672,90 684,97 694,109 703,133 712,144 721,166 731,163 741,181 762,185 780,198 810,238 843,269 862,277 884,279 905,296 930,312 962,343 990,341 1008,360 1019,360 1045,332 1068,317 1083,316 1101,383 1112,396 1120,399 1130,394 1148,369 1170,349 1182,319 1190,311 1202,315 1222,345 1238,363 1252,386 1261,376 1269,379 1281,350 1310,354 1333,355 1347,349 1357,351 1380,335 1392,318 1412,343 1419,343 1430,310 1441,264 1453,230 1464,231 1464,198 1475,172 1490,150 1505,140 1516,145 1524,154"/>
            <polyline transform="translate(780 1020) scale(.4592 .3333)" points="0,154 12,170 24,180 35,180 47,163 58,130 68,118 78,133 98,185 120,222 154,269 165,270 182,280 190,340 197,377 207,395 220,391 235,381 249,390 270,409 285,415 305,417 320,430 336,441 353,438 362,390 370,355 378,346 388,347 396,395 403,600 409,768 416,790 421,822 430,832 455,823 478,821 498,811 520,806 545,796 559,805 569,797 575,590 580,470 599,296 628,299 645,312 660,324 682,323 702,348 712,350 742,316 762,309 780,306 805,317 828,319 850,330 870,331 905,324 940,295 970,270 988,250 1000,246 1018,258 1040,253 1062,244 1074,244 1092,262 1115,303 1137,336 1150,335 1182,323 1212,343 1240,357 1268,339 1274,338 1290,311 1315,340 1332,376 1342,381 1370,370 1384,373 1396,392 1403,422 1410,510 1414,590 1425,692 1432,710 1441,790 1448,837 1467,835 1468,850 1483,870 1500,885 1513,917 1524,917"/>
            <polyline transform="translate(1480 1020) scale(.4592 .3333)" points="0,917 12,925 25,928 38,914 49,915 70,812 80,790 90,725 101,628 115,610 130,575 142,520 151,428 160,378 168,358 192,363 200,360 215,346 237,336 262,358 285,375 305,386 322,387 335,374 351,361 368,403 385,402 395,411 402,405 413,414 430,404 452,393 475,393 497,401 514,407 526,405 534,380 543,373 560,388 572,391 595,407 620,412 640,417 655,418 680,408 710,400 735,390 763,368 790,355 813,350 825,354 862,349 890,358 925,375 945,375 975,344 1000,320 1033,301 1078,298 1095,315 1113,360 1123,395 1138,413 1165,399 1184,391 1200,408 1218,422 1242,457 1265,405 1280,330 1298,235 1312,182 1325,178 1347,242 1355,250 1366,250 1378,232 1392,185 1403,145 1412,118 1422,137 1431,147 1442,187 1452,195 1465,262 1481,318"/>
            <polyline transform="translate(2160 1020) scale(.4464 .3333)" points="0,318 8,327 22,341 40,338 42,322 53,330 75,380 97,407 125,405 148,418 170,441 200,463 230,462 248,437 262,433 277,422 295,438 320,450 345,448 385,428 437,404 475,409 495,402 505,393 555,384 595,388 622,386 650,368 673,359 705,371 737,376 755,366 780,366 800,398 812,408 838,393 855,377 865,360 873,357 905,369 925,363 942,349 960,347 983,328 1010,332 1030,320 1048,296 1060,277 1073,281 1082,328"/>
        </g>

        <!-- axes -->
        <path d="M2733 1044.500H2726V1383H2733M2726 1156.500H2733M2726 1269.500H2733" fill="none" stroke="#eee" stroke-width="1.500"/>
        <g class="axis" text-anchor="end" fill="#2b80dc">
            <text x="129.500" y="1132.500">10.0 km/h</text>
            <text x="129.500" y="1303">5.0 km/h</text>
        </g>
        <g class="axis" text-anchor="middle" fill="#666">
            <text x="139" y="1405.500">0.0 km</text>
            <text x="954.500" y="1405.500">2.0 km</text>
            <text x="1769.500" y="1405.500">4.0 km</text>
            <text x="2584.500" y="1405.500">6.0 km</text>
        </g>
        <g class="axis" fill="#888">
            <text x="2659" y="1132.500">233 m</text>
            <text x="2659" y="1303">116 m</text>
        </g>
        <g class="axis" fill="#e8606a">
            <text x="2741" y="1049">232 bpm</text>
            <text x="2741" y="1163">156 bpm</text>
            <text x="2741" y="1274">81 bpm</text>
            <text x="2741" y="1388">5 bpm</text>
        </g>
    </svg>

</body>

</html>
```
FILE: styles.css
```css
* {
    box-sizing: border-box;
}

body {
    margin: 0;
    width: 2860px;
    height: 1416px;
    overflow: hidden;
    background-color: #fff;
    font-family: "Liberation Sans", Arial, sans-serif;
    color: #000;
}

button {
    font-family: inherit;
    padding: 0;
    margin: 0;
    display: flex;
    align-items: center;
    justify-content: center;
}

/* header */
.header {
    display: grid;
    grid-template-columns: 1fr 138px;
    height: 59px;
}

.title {
    margin: 0;
    padding: 7px 14px 0 0;
    font-size: 30px;
    font-weight: normal;
    line-height: 36px;
    text-align: center;
}

.title span {
    color: #808080;
}

.share-button {
    height: 50px;
    margin-top: 1px;
    border: 0;
    background-color: #eee;
    color: #444;
    font-size: 24px;
    gap: 12px;
    padding-bottom: 3px;
}

/* summary */
.stats {
    display: grid;
    grid-template-columns: repeat(4, 1fr);
    row-gap: 18px;
    height: 210px;
    padding: 18px 40px 0 46px;
    background-color: #f5f5f5;
    align-content: start;
    justify-items: center;
}

.stat-label {
    height: 28px;
    line-height: 28px;
    margin-bottom: 2px;
    font-size: 24px;
    color: #555;
    text-align: center;
}

.stat-box {
    display: flex;
    align-items: center;
    width: 524px;
    height: 44px;
    padding-right: 12px;
    border-radius: 22px;
    background-color: #fff;
}

.stat-icon {
    width: 34px;
    height: 34px;
    margin: 0 4px 0 16px;
}

.value {
    flex: 1;
    text-align: center;
    font-size: 28px;
}

.unit {
    font-size: 24px;
    color: #808080;
}

/* map and laps */
.content {
    display: flex;
    justify-content: space-between;
    height: 705px;
    margin-top: 46px;
    padding: 0 46px 0 49px;
}

.left {
    width: 1659px;
}

.map {
    position: relative;
    width: 1659px;
    height: 593px;
    border: 2px solid #e3e3e3;
    border-radius: 10px;
    overflow: hidden;
}

.map-canvas {
    display: block;
    width: 1655px;
    height: 589px;
}

.river path {
    fill: none;
    stroke: #b5cdf0;
    stroke-width: 1.6px;
}

.street path {
    fill: none;
    stroke: #dcdad8;
    stroke-width: 1.2px;
}

.rail path {
    fill: none;
    stroke: #bbb;
    stroke-width: 1.5px;
}

.minor-case,
.minor,
.major-case,
.major {
    fill: none;
    stroke-linejoin: round;
}

.minor-case {
    stroke: #e9d9a6;
    stroke-width: 12px;
}

.minor {
    stroke: #fdf6cf;
    stroke-width: 8px;
}

.major-case {
    stroke: #f3d48f;
    stroke-width: 17px;
}

.major {
    stroke: #fcd985;
    stroke-width: 13px;
}

.map-label {
    font-family: "Open Sans", "Noto Sans", sans-serif;
    font-weight: 600;
    fill: #706e69;
}

.map-label text {
    paint-order: stroke;
    stroke: rgba(255, 255, 255, 0.6);
    stroke-width: 6px;
}

.map-label path {
    fill: none;
}

.map-label .town {
    fill: #444;
}

.map-label .district {
    fill: #957c78;
    font-weight: 400;
}

.map-label .forest {
    fill: #6d8f72;
    font-style: italic;
}

.track {
    fill: none;
    stroke: #ff0d18;
    stroke-width: 13px;
    stroke-linejoin: round;
    stroke-linecap: round;
}

.zoom-control {
    position: absolute;
    left: 17px;
    top: 12px;
    display: flex;
    flex-direction: column;
    gap: 1px;
}

.zoom-control button {
    width: 37px;
    height: 37px;
    border: 2px solid #555;
    border-radius: 3px 3px 0 0;
    background-color: #e6eefc;
    color: #444;
    font-size: 26px;
    font-weight: bold;
}

.zoom-control button:last-child {
    border-radius: 0 0 3px 3px;
}

.type-control {
    position: absolute;
    left: 78px;
    top: 11px;
    display: flex;
    gap: 9px;
}

.type-control button {
    width: 90px;
    height: 24px;
    border: 2px solid #555;
    border-radius: 4px;
    background-color: #e6eefc;
    color: #555;
    font-size: 17.5px;
    font-weight: bold;
    letter-spacing: 0.8px;
}

.type-control .active {
    background-color: #555;
    color: #fff;
}

.map-button {
    position: absolute;
    width: 47px;
    height: 47px;
    border: 2px solid #555;
    border-radius: 4px;
    background-color: #f7f7f5;
}

.expand-button {
    right: 12px;
    top: 12px;
    width: 48px;
    height: 48px;
    background-color: #e6eefc;
}

.north-button {
    left: 13px;
    top: 476px;
}

.full-button {
    left: 13px;
    top: 529px;
    height: 48px;
    background-color: #555;
}

.attribution {
    position: absolute;
    right: 0;
    bottom: 0;
    display: flex;
    align-items: center;
    width: 529px;
    height: 32px;
    padding: 0 12px 2px 15px;
    border-radius: 8px 0 8px 0;
    background-color: rgba(255, 255, 255, 0.75);
    font-size: 18px;
    white-space: nowrap;
}

.attribution svg {
    margin-right: 11px;
}

.bing {
    margin-left: -8px;
    margin-right: 12px;
    color: #777;
    font-family: "Open Sans", sans-serif;
    font-size: 14px;
}

.attribution a {
    color: #2079d0;
    text-decoration: none;
}

.player {
    width: 1200px;
    margin: 28px 0 0 230px;
}

.slider {
    display: flex;
    align-items: center;
    justify-content: flex-end;
    height: 10px;
    border-radius: 5px;
    background-color: #d3d3d3;
}

.slider-handle {
    flex: none;
    width: 40px;
    height: 40px;
    margin-right: 2px;
    border: 2px solid #808080;
    border-radius: 50%;
    background-color: #fff;
}

.readouts {
    display: flex;
    justify-content: space-between;
    margin-top: 24px;
}

.readout {
    display: flex;
    align-items: center;
    width: 269px;
    height: 40px;
    padding: 0 10px 0 6px;
    border: 2px solid #e3e3e3;
    border-radius: 16px;
    background-color: #f5f5f5;
}

.readout .value {
    font-size: 24px;
}

.readout .unit {
    font-size: 22px;
    padding-bottom: 3px;
}

.right {
    display: flex;
    flex-direction: column;
    align-items: center;
}

.laps {
    width: 1046px;
    height: 520px;
    padding-right: 3px;
    border: 2px solid #e3e3e3;
    border-radius: 14px;
    overflow: hidden;
}

.laps table {
    width: 1039px;
    table-layout: fixed;
    border-collapse: separate;
    border-spacing: 0;
    font-size: 24px;
    color: #444;
    text-align: center;
}

.laps th,
.laps td {
    height: 32px;
    padding: 0 0 2px 2px;
    border-right: 2px solid #e3e3e3;
    line-height: 29px;
}

.laps th {
    height: 34px;
    border-bottom: 2px solid #e3e3e3;
    background-color: #f5f5f5;
    color: #555;
    font-weight: normal;
}

.laps td:last-child {
    border-right-color: transparent;
}

.laps .num {
    width: 50px;
}

.laps .speed {
    width: 357px;
}

.best {
    background-color: #d2f2d2;
}

.worst {
    background-color: #ffd3d0;
}

.split-buttons {
    display: flex;
    height: 52px;
    margin-top: 26px;
    border: 2px solid #e3e3e3;
    border-radius: 8px;
    overflow: hidden;
}

.split-buttons button {
    width: 66.4px;
    border: 0;
    border-right: 2px solid #e3e3e3;
    background-color: #fff;
    color: #000;
    font-size: 20px;
    padding-top: 2px;
}

.split-buttons button:last-child {
    border-right: 0;
}

.split-buttons svg {
    margin-top: -5px;
}

.split-buttons .wide {
    width: 74px;
}

.split-buttons .active {
    background-color: #757575;
    color: #fff;
}

/* chart */
.chart {
    display: block;
}

.line polyline {
    fill: none;
    stroke-width: 3.2px;
    stroke-linejoin: round;
    stroke-linecap: round;
    vector-effect: non-scaling-stroke;
}

.speed-line {
    stroke: #1f80ea;
}

.heart-line {
    stroke: #ea6469;
}

.axis {
    font-size: 18px;
}
```
